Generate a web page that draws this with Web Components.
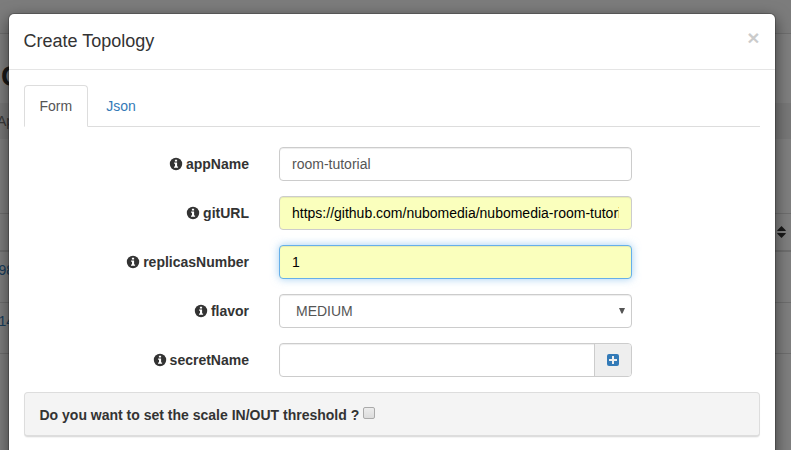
<!DOCTYPE html>
<html lang="en">
<head>
<meta charset="utf-8">
<title>Create Topology</title>
<style>
body{margin:0;height:450px;overflow:hidden;background:#fff;font:14px/20px "Liberation Sans",Arial,sans-serif;color:#333}
</style>
</head>
<body>
<app-backdrop></app-backdrop>
<modal-dialog heading="Create Topology">
  <tab-strip></tab-strip>
  <form-row label="appName"><text-field>room-tutorial</text-field></form-row>
  <form-row label="gitURL"><text-field filled>https://github.com/nubomedia/nubomedia-room-tutorial</text-field></form-row>
  <form-row label="replicasNumber"><text-field filled focused>1</text-field></form-row>
  <form-row label="flavor"><select-field>MEDIUM</select-field></form-row>
  <form-row label="secretName"><add-field></add-field></form-row>
  <option-panel>Do you want to set the scale IN/OUT threshold ?</option-panel>
</modal-dialog>
<script>
const define = (name, markup, setup) => customElements.define(name, class extends HTMLElement {
  constructor() {
    super();
    this.attachShadow({mode: 'open'}).innerHTML = markup;
  }
  connectedCallback() { if (setup) setup(this, this.shadowRoot); }
});

define('app-backdrop', `<style>
:host{display:block;position:relative;width:791px;height:450px;overflow:hidden;white-space:nowrap}
*{box-sizing:border-box}
nav{height:34px;background:#f8f8f8;border-bottom:1px solid #dcdcdc}
h1{margin:0;height:69px;padding:25px 0 0 1px;font-size:29px;line-height:34px;font-weight:bold;color:#333}
.crumb{height:36px;background:#f0f0f0;padding-top:8px;color:#777;text-indent:-3px}
.gap{height:75px;border-bottom:1px solid #ddd}
.head{height:38px;border-bottom:2px solid #ddd;display:flex;justify-content:flex-end;align-items:center;padding-right:5px}
.row{height:51px;border-bottom:1px solid #ddd;padding-top:8px;color:#337ab7;text-indent:-1.5px}
.shade{position:absolute;inset:0;background:rgba(0,0,0,.5)}
svg{display:block}
</style>
<nav></nav><h1>C</h1><div class="crumb">Ap</div><div class="gap"></div>
<div class="head"><svg width="9" height="12" viewBox="0 0 9 12"><path d="M4.5 0L8.7 4.2V5H.3V4.2ZM.3 7H8.7V7.8L4.5 12L.3 7.8Z" fill="#333"/></svg></div>
<div class="row">98</div><div class="row">14</div><div class="shade"></div>`);

define('modal-dialog', `<style>
:host{display:block;position:absolute;left:7.5px;top:13px;width:768px;height:600px;box-sizing:border-box;border:1px solid rgba(0,0,0,.2);border-radius:6px;background:#fff;background-clip:padding-box;box-shadow:0 5px 15px rgba(0,0,0,.5)}
header{box-sizing:border-box;height:56px;padding:14px 15px;border-bottom:1px solid #e5e5e5;display:flex;justify-content:space-between}
h4{margin:0;font-size:18px;line-height:26px;font-weight:normal}
button{all:unset;margin-top:-1px;height:21px;font-size:21px;font-weight:bold;line-height:21px;color:#000;opacity:.2;text-shadow:0 1px 0 #fff}
main{padding:15px}
</style>
<header><h4></h4><button aria-label="Close">×</button></header><main><slot></slot></main>`,
(host, root) => { root.querySelector('h4').textContent = host.getAttribute('heading'); });

define('tab-strip', `<style>
:host{display:flex;gap:2px;box-sizing:border-box;height:42px;border-bottom:1px solid #ddd;margin-bottom:20px}
span{box-sizing:border-box;height:42px;padding:10px 15px;border:1px solid transparent;border-radius:4px 4px 0 0;color:#337ab7}
.on{color:#555;background:#fff;border-color:#ddd #ddd #fff}
</style><span class="on">Form</span><span>Json</span>`);

define('form-row', `<style>
:host{display:grid;grid-template-columns:225.5px 353px;column-gap:30px;height:34px;margin-bottom:15px}
label{font-weight:bold;padding-top:7px;display:flex;justify-content:flex-end;gap:4px}
svg{width:12px;height:12px;margin-top:4px;overflow:visible}
</style>
<label><svg viewBox="0 0 12 12"><circle cx="6" cy="6" r="6.2" fill="#333"/><path d="M4.9 1.7H7.1V3.5H4.9ZM4.1 4.6H7.1V8.5H8.1V9.8H4V8.5H5V5.8H4.1Z" fill="#fff"/></svg><span></span></label><slot></slot>`,
(host, root) => { root.querySelector('span').textContent = host.getAttribute('label'); });

const box = `box-sizing:border-box;height:34px;border:1px solid #ccc;border-radius:4px;background:#fff;box-shadow:inset 0 1px 1px rgba(0,0,0,.075);`;

define('text-field', `<style>
:host{display:block;${box}padding:6px 12px;color:#555}
:host([filled]){background:#faffbd;color:#000}
:host([focused]){border-color:#66afe9;box-shadow:inset 0 1px 1px rgba(0,0,0,.075),0 0 8px rgba(102,175,233,.6)}
div{overflow:hidden;white-space:nowrap}
</style><div><slot></slot></div>`);

define('select-field', `<style>
:host{display:flex;justify-content:space-between;${box}padding:6px 6px 6px 16px;color:#555}
svg{margin-top:7px}
</style><slot></slot><svg width="6" height="6" viewBox="0 0 6 6"><path d="M0 0H6L3.5 5.6H2.5Z" fill="#555"/></svg>`);

define('add-field', `<style>
:host{display:flex;${box}overflow:hidden}
.in{flex:1}
.add{width:37px;box-sizing:border-box;border-left:1px solid #ccc;background:#eee;display:grid;place-items:center}
</style><div class="in"></div><div class="add"><svg width="12" height="12" viewBox="0 0 12 12"><rect width="12" height="12" rx="2" fill="#337ab7"/><path d="M5 2H7V5H10V7H7V10H5V7H2V5H5Z" fill="#eee"/></svg></div>`);

define('option-panel', `<style>
:host{display:flex;box-sizing:border-box;height:45px;padding:12px 15px;border:1px solid #ddd;border-radius:4px;background:#f4f4f4;box-shadow:0 1px 1px rgba(0,0,0,.05);border-bottom-width:2px;font-weight:bold;gap:4px}
i{box-sizing:border-box;width:12px;height:12px;margin-top:2px;border:1px solid #aaa;border-radius:2px;background:linear-gradient(#ececec,#dcdcdc)}
</style><slot></slot><i></i>`);
</script>
</body>
</html>
